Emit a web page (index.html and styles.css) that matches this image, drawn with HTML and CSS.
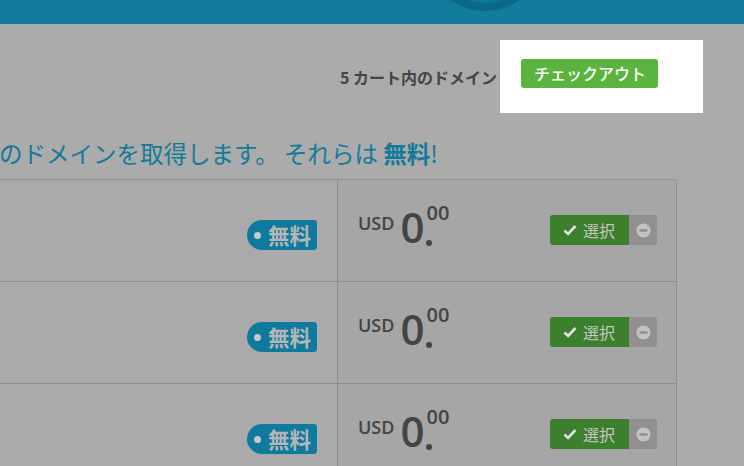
FILE: index.html
```html
<!doctype html>
<html lang="ja">
  <head>
    <meta charset="utf-8">
    <title>ドメインを選択</title>
    <meta name="viewport" content="width=device-width, initial-scale=1.0">
    <link rel="stylesheet" href="styles.css">
  </head>
  <body>
    <header class="topbar">
      <svg class="logo" width="100" height="14" viewBox="0 0 100 14" aria-hidden="true">
        <ellipse cx="50" cy="-22" rx="46" ry="33" fill="#0b6889"/>
        <ellipse cx="50" cy="-20" rx="33" ry="23" fill="#117797"/>
      </svg>
    </header>

    <div class="cart">
      <span class="cart-count">5 カート内のドメイン</span>
      <div class="cart-focus">
        <button class="checkout">チェックアウト</button>
      </div>
    </div>

    <h2 class="lead">のドメインを取得します。 それらは <strong>無料</strong>!</h2>

    <section class="results">
      <div class="row">
        <div class="name">
          <span class="tag">無料</span>
        </div>
        <div class="offer">
          <div class="price">
            <span class="cur">USD</span>
            <span class="int">0</span>
            <span class="cents">00</span>
          </div>
          <div class="pick">
            <button class="pick-on">
              <svg width="14" height="12" viewBox="0 0 14 12"><path d="M1.5 6.5l3.6 3.4L12.5 2" fill="none" stroke="#e2e2e2" stroke-width="2.6"/></svg>
              選択
            </button>
            <button class="pick-off" aria-label="削除">
              <svg width="15" height="15" viewBox="0 0 15 15"><circle cx="7.5" cy="7.5" r="7" fill="#c3c3c3"/><rect x="3.5" y="6.3" width="8" height="2.4" fill="#8e8e8e"/></svg>
            </button>
          </div>
        </div>
      </div>

      <div class="row">
        <div class="name">
          <span class="tag">無料</span>
        </div>
        <div class="offer">
          <div class="price">
            <span class="cur">USD</span>
            <span class="int">0</span>
            <span class="cents">00</span>
          </div>
          <div class="pick">
            <button class="pick-on">
              <svg width="14" height="12" viewBox="0 0 14 12"><path d="M1.5 6.5l3.6 3.4L12.5 2" fill="none" stroke="#e2e2e2" stroke-width="2.6"/></svg>
              選択
            </button>
            <button class="pick-off" aria-label="削除">
              <svg width="15" height="15" viewBox="0 0 15 15"><circle cx="7.5" cy="7.5" r="7" fill="#c3c3c3"/><rect x="3.5" y="6.3" width="8" height="2.4" fill="#8e8e8e"/></svg>
            </button>
          </div>
        </div>
      </div>

      <div class="row">
        <div class="name">
          <span class="tag">無料</span>
        </div>
        <div class="offer">
          <div class="price">
            <span class="cur">USD</span>
            <span class="int">0</span>
            <span class="cents">00</span>
          </div>
          <div class="pick">
            <button class="pick-on">
              <svg width="14" height="12" viewBox="0 0 14 12"><path d="M1.5 6.5l3.6 3.4L12.5 2" fill="none" stroke="#e2e2e2" stroke-width="2.6"/></svg>
              選択
            </button>
            <button class="pick-off" aria-label="削除">
              <svg width="15" height="15" viewBox="0 0 15 15"><circle cx="7.5" cy="7.5" r="7" fill="#c3c3c3"/><rect x="3.5" y="6.3" width="8" height="2.4" fill="#8e8e8e"/></svg>
            </button>
          </div>
        </div>
      </div>
    </section>
  </body>
</html>
```

FILE: styles.css
```css
:root {
  --page: #ababab;
  --cell: #aaaaaa;
  --cell-alt: #a6a6a6;
  --line: #8e8e8e;
  --ink: #444444;
  --blue: #127a9b;
  --tag: #0e7a9d;
  --green: #5ab43e;
  --green-dim: #3c7f2d;
}

html,
body {
  margin: 0;
  height: 100%;
  overflow: hidden;
}

body {
  background: var(--page);
  color: var(--ink);
  font-family: "Open Sans", "Noto Sans CJK JP", sans-serif;
}

button {
  font: inherit;
  border: 0;
  cursor: pointer;
}

/* top bar */

.topbar {
  position: relative;
  height: 24px;
  background: #137b9b;
}

.logo {
  position: absolute;
  left: 435px;
  top: 0;
}

/* cart */

.cart {
  display: flex;
  justify-content: flex-end;
  align-items: center;
  margin: 16px 41px 0 0;
}

.cart-count {
  font-family: "Noto Sans CJK JP", sans-serif;
  font-size: 16px;
  font-weight: 700;
  color: #454545;
  margin-right: 3px;
}

.cart-focus {
  background: #fff;
  padding: 19px 45px 25px 21px;
}

.checkout {
  display: block;
  height: 29px;
  padding: 0 12px 0 13px;
  border-radius: 3px;
  background: var(--green);
  color: #fff;
  font-family: "Noto Sans CJK JP", sans-serif;
  font-size: 16px;
  font-weight: 500;
  line-height: 29px;
}

/* heading */

.lead {
  margin: 25px 0 0 -1px;
  font-family: "Noto Sans CJK JP", sans-serif;
  font-size: 23.5px;
  font-weight: 400;
  line-height: 30px;
  color: var(--blue);
  white-space: nowrap;
}

.lead strong {
  font-weight: 700;
}

/* results */

.results {
  margin: 11px 67px 0 -20px;
  border: 1px solid var(--line);
  border-radius: 0 3px 0 0;
}

.row {
  display: grid;
  grid-template-columns: 1fr 339px;
  height: 101px;
  border-bottom: 1px solid var(--line);
}

.name {
  display: flex;
  justify-content: flex-end;
  align-items: flex-start;
  padding: 40px 20px 0 0;
  background: var(--cell);
}

.tag {
  display: flex;
  align-items: center;
  height: 30px;
  padding: 0 6px 0 21px;
  position: relative;
  border-radius: 15px 3px 3px 15px;
  background: var(--tag);
  color: #b6b6b6;
  font-family: "Noto Sans CJK JP", sans-serif;
  font-size: 21.5px;
  font-weight: 700;
  line-height: 30px;
}

.tag::before {
  content: "";
  position: absolute;
  left: 7px;
  top: 12px;
  width: 7px;
  height: 7px;
  border-radius: 50%;
  background: #c9c9c9;
}

.offer {
  display: flex;
  justify-content: space-between;
  align-items: flex-start;
  padding: 23px 19px 0 20px;
  border-left: 1px solid var(--line);
  background: var(--cell-alt);
}

.price {
  display: flex;
  align-items: flex-start;
  line-height: 1;
  color: var(--ink);
}

.cur {
  margin: 11px 6px 0 0;
  font-size: 18px;
  font-weight: 600;
}

.int {
  margin-top: 3px;
  font-size: 42px;
  font-weight: 600;
}

/* the decimal point sits under the cents */
.cents {
  position: relative;
  margin-left: 2px;
  font-size: 20px;
  font-weight: 600;
}

.cents::before {
  content: "";
  position: absolute;
  left: 0;
  top: 37px;
  width: 6px;
  height: 6px;
  border-radius: 50%;
  background: var(--ink);
}

.pick {
  display: flex;
  margin-top: 12px;
  height: 30px;
}

.pick-on {
  display: flex;
  align-items: center;
  gap: 6px;
  width: 79px;
  padding: 0 0 0 13px;
  border-radius: 3px 0 0 3px;
  background: var(--green-dim);
  color: #c6c6c6;
  font-family: "Noto Sans CJK JP", sans-serif;
  font-size: 16px;
}

.pick-off {
  display: flex;
  align-items: center;
  justify-content: center;
  width: 28px;
  padding: 0;
  border-radius: 0 3px 3px 0;
  background: #909090;
}
```
